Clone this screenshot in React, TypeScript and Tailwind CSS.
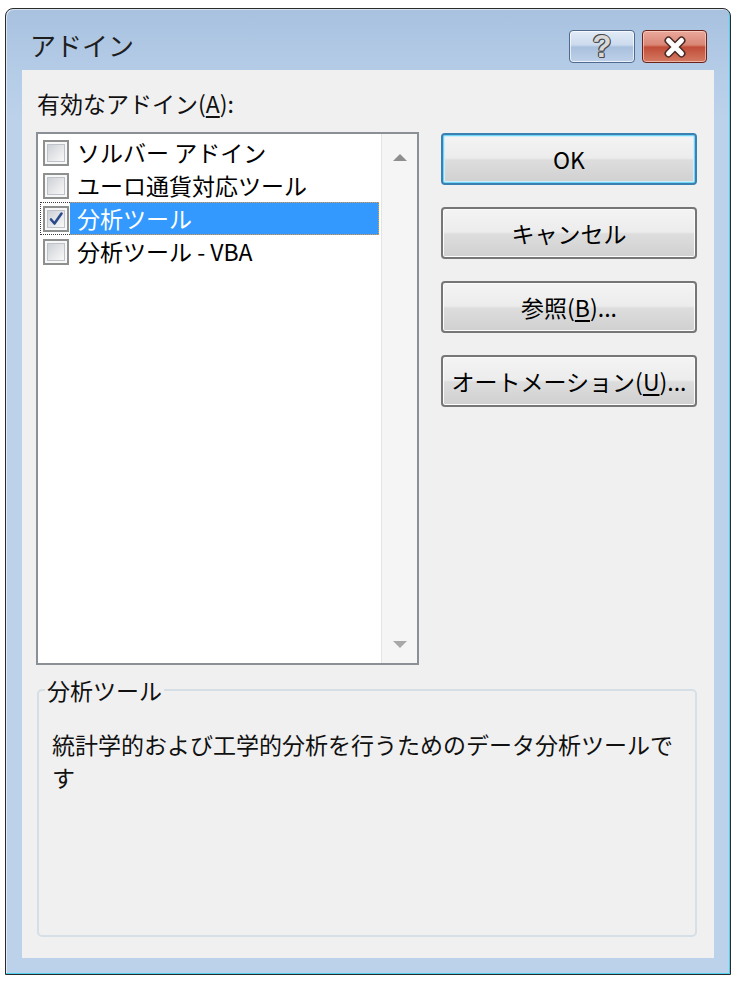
import React from "react";

type Item = { label: string; checked: boolean; selected?: boolean };

const items: Item[] = [
  { label: "ソルバー アドイン", checked: false },
  { label: "ユーロ通貨対応ツール", checked: false },
  { label: "分析ツール", checked: true, selected: true },
  { label: "分析ツール - VBA", checked: false },
];

function CheckBox({ checked }: { checked: boolean }) {
  return (
    <div className="w-[26px] h-[26px] border-2 border-[#8e8f8f] bg-[#f7f7f7] p-[2px]">
      <div className="relative w-full h-full border border-[#bfc3c9] bg-[linear-gradient(135deg,#cdd1d6_0%,#e6e7e9_55%,#f8f8f8_100%)]">
        {checked && (
          <svg className="absolute inset-0" width="16" height="16" viewBox="0 0 16 16">
            <path d="M3 8.5 L6.5 12.5 L13.5 2.5" fill="none" stroke="#2b4a8c" strokeWidth="2.6" strokeLinecap="round" strokeLinejoin="round" />
          </svg>
        )}
      </div>
    </div>
  );
}

function Row({ item }: { item: Item }) {
  const sel = !!item.selected;
  return (
    <div className="flex h-[33px]">
      <div className={`w-[30px] flex items-center justify-center border-y border-l border-dotted ${sel ? "border-[#3a3a3a]" : "border-transparent"}`}>
        <CheckBox checked={item.checked} />
      </div>
      <div className={`flex-1 flex items-center pl-[7px] text-[23px] leading-none border-y border-r border-dotted ${sel ? "bg-[#3399ff] text-white border-[#f09a3a]" : "border-transparent text-black"}`}>
        {item.label}
      </div>
    </div>
  );
}

const btn =
  "h-[52px] rounded-[4px] border-2 flex items-center justify-center text-[23px] leading-none text-black bg-[linear-gradient(to_bottom,#f4f4f4_0%,#ececec_48%,#dddddd_52%,#d0d0d0_100%)]";

function Btn({ children, primary }: { children: React.ReactNode; primary?: boolean }) {
  return (
    <div
      className={`${btn} ${
        primary
          ? "border-[#3c7fb1] shadow-[inset_0_0_0_1px_#6fd6f6,inset_0_0_0_2px_#cdeefa]"
          : "border-[#767676] shadow-[inset_0_0_0_1px_#fbfbfb]"
      }`}
    >
      {children}
    </div>
  );
}

export default function App() {
  return (
    <div className="min-h-screen bg-white pt-[8px] pl-[5px] font-['Noto_Sans_CJK_JP','Noto_Sans',sans-serif] text-[#111]">
      <div className="w-[726px] h-[967px] border border-[#2b2b2b] rounded-t-[8px] flex flex-col bg-[linear-gradient(to_bottom,#a7c1df_0px,#b5cce7_62px,#bcd2eb_110px,#bcd2eb_100%)] shadow-[inset_-1px_-1px_0_#4fd0ee,inset_1px_1px_0_rgba(255,255,255,0.55)]">
        {/* title bar */}
        <div className="h-[61px] flex items-start justify-between pl-[24px] pr-[23px]">
          <div className="mt-[20px] text-[26px] leading-[32px] text-[#1e1e1e]">アドイン</div>
          <div className="mt-[21px] flex gap-[7px]">
            <div className="w-[66px] h-[33px] rounded-[4px] border border-[#4f6a8d] bg-[linear-gradient(to_bottom,#e3ecf7_0%,#cbdaed_45%,#a9c0dd_52%,#bed1e9_100%)] shadow-[inset_0_0_0_1px_rgba(255,255,255,0.7)] flex items-center justify-center">
              <span className="font-['Liberation_Sans',sans-serif] font-bold text-[31px] leading-none text-[#d8d8d8] [text-shadow:1px_0_0_#4a4a4a,-1px_0_0_#4a4a4a,0_1px_0_#4a4a4a,0_-1px_0_#4a4a4a,1px_1px_0_#4a4a4a,-1px_-1px_0_#4a4a4a]">
                ?
              </span>
            </div>
            <div className="w-[65px] h-[33px] rounded-[4px] border border-[#6b2219] bg-[linear-gradient(to_bottom,#eaa99c_0%,#d98574_45%,#c14d38_52%,#d47a63_100%)] shadow-[inset_0_0_0_1px_rgba(255,220,210,0.6)] flex items-center justify-center">
              <svg width="30" height="22" viewBox="0 0 30 22">
                <path d="M8.5 4.5 L21.5 17.5 M21.5 4.5 L8.5 17.5" stroke="#4a2a26" strokeWidth="8" strokeLinecap="round" />
                <path d="M8.5 4.5 L21.5 17.5 M21.5 4.5 L8.5 17.5" stroke="#ffffff" strokeWidth="5" strokeLinecap="round" />
              </svg>
            </div>
          </div>
        </div>

        {/* client area */}
        <div className="mx-[16px] h-[888px] bg-[#f0f0f0] pt-[17px] pl-[14px]">
          <div className="h-[32px] mb-[13px] pl-[1px] text-[23px] leading-[32px]">
            有効なアドイン(<span className="underline underline-offset-[3px]">A</span>):
          </div>

          <div className="flex">
            <div className="w-[383px] h-[533px] border-2 border-[#8b9097] bg-white flex">
              <div className="flex-1 pt-[2px] px-[2px]">
                {items.map((it) => (
                  <Row key={it.label} item={it} />
                ))}
              </div>
              <div className="w-[36px] bg-[#f5f5f5] border-l border-[#e4e4e4] flex flex-col items-center justify-between pt-[19px] pb-[14px]">
                <svg width="14" height="8" viewBox="0 0 14 8">
                  <path d="M0 8 L7 1 L14 8 Z" fill="#8e8e8e" />
                </svg>
                <svg width="14" height="8" viewBox="0 0 14 8">
                  <path d="M0 0 L14 0 L7 7 Z" fill="#a8a8a8" />
                </svg>
              </div>
            </div>

            <div className="ml-[22px] mt-[1px] w-[256px] flex flex-col gap-[22px]">
              <Btn primary>OK</Btn>
              <Btn>キャンセル</Btn>
              <Btn>
                参照(<span className="underline underline-offset-[3px]">B</span>)...
              </Btn>
              <Btn>
                オートメーション(<span className="underline underline-offset-[3px]">U</span>)...
              </Btn>
            </div>
          </div>

          <fieldset className="mt-[9px] ml-[1px] w-[660px] h-[263px] border-2 border-[#d5dfe5] rounded-[5px]">
            <legend className="ml-[6px] px-[2px] text-[23px] leading-[32px]">分析ツール</legend>
            <p className="ml-[13px] mt-[22px] w-[630px] text-[23px] leading-[33px]">
              統計学的および工学的分析を行うためのデータ分析ツールです
            </p>
          </fieldset>
        </div>
      </div>
    </div>
  );
}
